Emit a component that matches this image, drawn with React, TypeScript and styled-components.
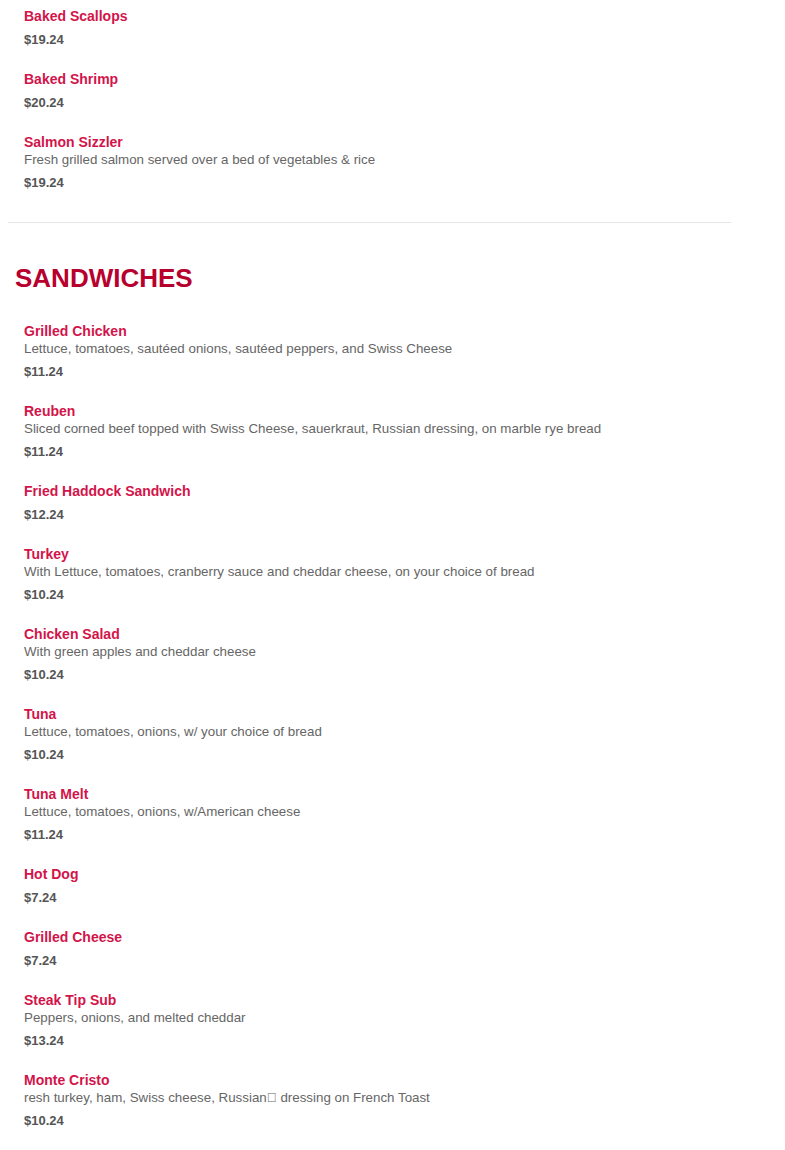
import React from 'react';
import styled, { createGlobalStyle } from 'styled-components';

type Item = {
  name: string;
  desc?: string;
  price: string;
};

const seafood: Item[] = [
  { name: 'Baked Scallops', price: '$19.24' },
  { name: 'Baked Shrimp', price: '$20.24' },
  {
    name: 'Salmon Sizzler',
    desc: 'Fresh grilled salmon served over a bed of vegetables & rice',
    price: '$19.24',
  },
];

const sandwiches: Item[] = [
  {
    name: 'Grilled Chicken',
    desc: 'Lettuce, tomatoes, sautéed onions, sautéed peppers, and Swiss Cheese',
    price: '$11.24',
  },
  {
    name: 'Reuben',
    desc: 'Sliced corned beef topped with Swiss Cheese, sauerkraut, Russian dressing, on marble rye bread',
    price: '$11.24',
  },
  { name: 'Fried Haddock Sandwich', price: '$12.24' },
  {
    name: 'Turkey',
    desc: 'With Lettuce, tomatoes, cranberry sauce and cheddar cheese, on your choice of bread',
    price: '$10.24',
  },
  { name: 'Chicken Salad', desc: 'With green apples and cheddar cheese', price: '$10.24' },
  { name: 'Tuna', desc: 'Lettuce, tomatoes, onions, w/ your choice of bread', price: '$10.24' },
  { name: 'Tuna Melt', desc: 'Lettuce, tomatoes, onions, w/American cheese', price: '$11.24' },
  { name: 'Hot Dog', price: '$7.24' },
  { name: 'Grilled Cheese', price: '$7.24' },
  { name: 'Steak Tip Sub', desc: 'Peppers, onions, and melted cheddar', price: '$13.24' },
  {
    name: 'Monte Cristo',
    desc: 'resh turkey, ham, Swiss cheese, Russian\uE000 dressing on French Toast',
    price: '$10.24',
  },
];

const GlobalStyle = createGlobalStyle`
  body {
    margin: 8px;
    background: #fff;
    font-family: 'Liberation Sans', Arial, sans-serif;
  }
`;

const MenuList = ({ items }: { items: Item[] }) => (
  <List>
    {items.map((v) => (
      <Entry key={v.name}>
        <Name>{v.name}</Name>
        {v.desc && <Desc>{v.desc}</Desc>}
        <Price>{v.price}</Price>
      </Entry>
    ))}
  </List>
);

export default function App() {
  return (
    <Page>
      <GlobalStyle />
      <Section $divider>
        <MenuList items={seafood} />
      </Section>
      <Section>
        <Heading>SANDWICHES</Heading>
        <MenuList items={sandwiches} />
      </Section>
    </Page>
  );
}

const Page = styled.div`
  width: 723px;
`;

const Section = styled.section<{ $divider?: boolean }>`
  padding-bottom: ${(p) => (p.$divider ? '31px' : '0')};
  border-bottom: ${(p) => (p.$divider ? '1px solid #e6e6e6' : 'none')};
`;

const Heading = styled.h2`
  margin: 40px 0 30px;
  padding-left: 7px;
  font-size: 26px;
  line-height: 30px;
  font-weight: 700;
  color: #b8002e;
`;

const List = styled.div`
  display: flex;
  flex-direction: column;
  gap: 23px;
  padding-left: 16px;
`;

const Entry = styled.div`
  display: flex;
  flex-direction: column;
`;

const Name = styled.div`
  font-size: 14px;
  line-height: 17px;
  font-weight: 700;
  color: #d3144a;
`;

const Desc = styled.div`
  font-size: 13.33px;
  line-height: 17px;
  color: #666;
`;

const Price = styled.div`
  margin-top: 6px;
  font-size: 13px;
  line-height: 17px;
  font-weight: 700;
  color: #555;
`;
